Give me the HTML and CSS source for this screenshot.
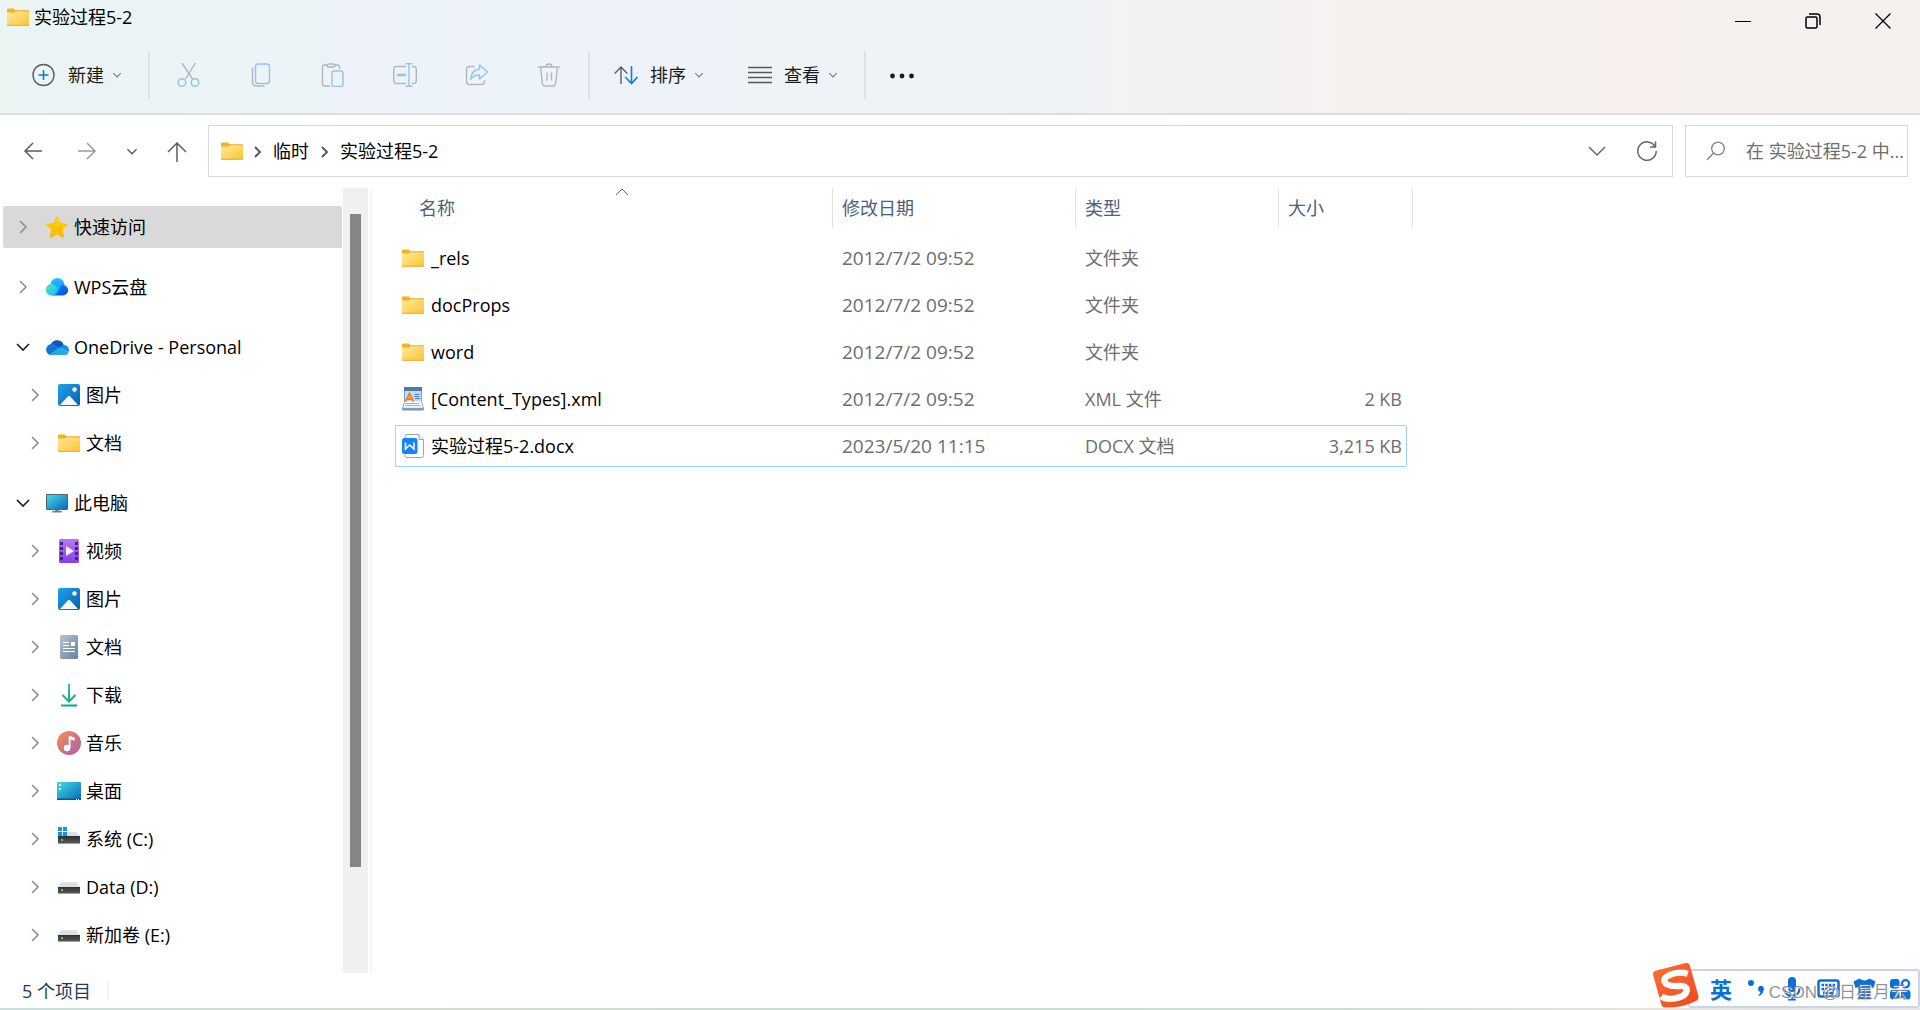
FILE: index.html
```
<!DOCTYPE html>
<html lang="zh-CN">
<head>
<meta charset="utf-8">
<meta name="viewport" content="width=device-width, initial-scale=1">
<title>实验过程5-2</title>
<link rel="stylesheet" href="styles.css">
</head>
<body>
<svg class="sprite" aria-hidden="true">
  <defs>
    <linearGradient id="g-folder" x1="0" y1="0" x2="1" y2="1"><stop offset="0" stop-color="#ffe9a2"/><stop offset="1" stop-color="#fec62f"/></linearGradient>
    <linearGradient id="g-star" x1="0" y1="0" x2="0" y2="1"><stop offset="0" stop-color="#ffd800"/><stop offset="1" stop-color="#fdb300"/></linearGradient>
    <linearGradient id="g-blue" x1="0" y1="0" x2="1" y2="1"><stop offset="0" stop-color="#1fa3e8"/><stop offset="1" stop-color="#0560b4"/></linearGradient>
    <linearGradient id="g-screen" x1="0" y1="0" x2="1" y2="1"><stop offset="0" stop-color="#3fdde0"/><stop offset="1" stop-color="#0a67c0"/></linearGradient>
    <linearGradient id="g-video" x1="0" y1="0" x2="0" y2="1"><stop offset="0" stop-color="#b678f2"/><stop offset="1" stop-color="#8440ea"/></linearGradient>
    <linearGradient id="g-doc" x1="0" y1="0" x2="1" y2="1"><stop offset="0" stop-color="#b4c5d8"/><stop offset="1" stop-color="#64819f"/></linearGradient>
    <linearGradient id="g-down" gradientUnits="userSpaceOnUse" x1="4" y1="0" x2="20" y2="24"><stop offset="0" stop-color="#3fd07f"/><stop offset="1" stop-color="#00969e"/></linearGradient>
    <linearGradient id="g-music" x1="0" y1="0" x2="1" y2="1"><stop offset="0" stop-color="#f6924c"/><stop offset="1" stop-color="#a95bb4"/></linearGradient>
    <linearGradient id="g-wps1" x1="0" y1="0" x2="1" y2="1"><stop offset="0" stop-color="#55e3b0"/><stop offset="1" stop-color="#1cc0ff"/></linearGradient>
    <linearGradient id="g-wps2" x1="0" y1="0" x2="1" y2="1"><stop offset="0" stop-color="#1a93ff"/><stop offset="1" stop-color="#0048d8"/></linearGradient>
    <linearGradient id="g-wps3" x1="0" y1="0" x2="0" y2="1"><stop offset="0" stop-color="#2bc0ff"/><stop offset="1" stop-color="#0a8cff"/></linearGradient>
    <linearGradient id="g-drive" x1="0" y1="0" x2="0" y2="1"><stop offset="0" stop-color="#303030"/><stop offset="1" stop-color="#5c5c5c"/></linearGradient>
    <linearGradient id="g-sogou" x1="0" y1="0" x2="1" y2="1"><stop offset="0" stop-color="#ff6e34"/><stop offset="1" stop-color="#ee4a1e"/></linearGradient>
  </defs>
  <symbol id="folder" viewBox="0 0 24 24">
    <path d="M1 4.500Q1 3.500 2 3.500h6l1.500 2V8H1z" fill="#f8b01c"/>
    <path d="M1 7.500h7.500l1.500-1.500h13v13.500q0 .5-.5.500h-21q-.500 0-.500-.500z" fill="url(#g-folder)"/>
    <path d="M9 5.800h14M1 20.300h22" stroke="#eaa41c" stroke-width="1"/>
  </symbol>
  <symbol id="star" viewBox="0 0 24 24"><path d="M12 1.500l3.300 6.900 7.700.900-5.700 5.200 1.500 7.600q.1.900-.8.500L12 19l-6 3.600q-.9.400-.8-.5l1.500-7.600L1 9.300l7.700-.9z" fill="url(#g-star)" stroke="#fdc20a" stroke-width=".8" stroke-linejoin="round"/></symbol>
  <symbol id="wps" viewBox="0 0 24 24">
    <circle cx="12.500" cy="10" r="7" fill="url(#g-wps3)"/>
    <path d="M7 20.500h11a5.300 5.300 0 1 0-4-9z" fill="url(#g-wps2)"/>
    <path d="M6.500 20.500q4.500 0 6-3l3-5.500-4-2z" fill="#19aeff"/>
    <path d="M6.500 20.500a5.800 5.800 0 1 1 5.600-7.500q1 5-5.600 7.500z" fill="url(#g-wps1)"/>
  </symbol>
  <symbol id="onedrive" viewBox="0 0 24 24">
    <path d="M6 9a7 7 0 0 1 12.800 1L14 15z" fill="#0a5cb0"/>
    <path d="M5 20A5.600 5.600 0 1 1 9.500 9.800L17 14z" fill="#0f78d4"/>
    <path d="M14 12.300l4.300-2.300A5 5 0 0 1 23.500 17z" fill="#1590df"/>
    <path d="M4 20l10-7.500 9.500 4.500a3.600 3.600 0 0 1-3.500 3z" fill="#28a8ea"/>
  </symbol>
  <symbol id="picture" viewBox="0 0 24 24"><rect x="1" y="1" width="22" height="22" rx="2" fill="url(#g-blue)"/><path d="M3 22l8-8.700q1-1 2 0l8 8.700z" fill="#f4f8fd"/><circle cx="17.500" cy="6.500" r="2.200" fill="#fff"/></symbol>
  <symbol id="pc" viewBox="0 0 24 24"><path d="M10 18h4v2h3v1.500H7V20h3z" fill="#77848f"/><rect x="1" y="3" width="22" height="16" rx="1" fill="#4f6476"/><rect x="2" y="4" width="20" height="14" fill="url(#g-screen)"/></symbol>
  <symbol id="video" viewBox="0 0 24 24"><rect x="2" y="0" width="20" height="24" rx="1.500" fill="url(#g-video)"/><path d="M3 3h3v3H3zM3 8h3v3H3zM3 13h3v3H3zM3 18h3v3H3zM18 3h3v3h-3zM18 8h3v3h-3zM18 13h3v3h-3zM18 18h3v3h-3z" fill="#47257f"/><path d="M9 7l8 5-8 5z" fill="#f4f0fc"/></symbol>
  <symbol id="doc" viewBox="0 0 24 24"><rect x="3" y="0" width="18" height="24" rx="1.500" fill="url(#g-doc)"/><path d="M6 7.500h6M6 10.500h6M6 13.500h12M6 16.500h12" stroke="#fff"/><rect x="14" y="7" width="4" height="4" fill="#fff"/></symbol>
  <symbol id="download" viewBox="0 0 24 24"><path d="M12 1v17M5.500 12l6.500 6.500L18.500 12M4 22.500h16" fill="none" stroke="url(#g-down)" stroke-width="2"/></symbol>
  <symbol id="music" viewBox="0 0 24 24"><circle cx="12" cy="12" r="12" fill="url(#g-music)"/><circle cx="10" cy="17" r="3.200" fill="#fff"/><path d="M11.700 17V4.500l6 2.200v3l-4.200-1.500V17z" fill="#fff"/></symbol>
  <symbol id="desktop" viewBox="0 0 24 24"><rect x="0" y="3" width="24" height="18" rx="1" fill="url(#g-screen)"/><path d="M0 20.300h24" stroke="#08538f" stroke-width="1.400"/><path d="M2 5h2v2H2zM2 9h2v2H2zM19 20h1v1h-1zM21 20h1v1h-1z" fill="#fff"/></symbol>
  <symbol id="drive" viewBox="0 0 24 24"><path d="M4.500 7h15l3.500 5H1z" fill="#dfe0e4"/><rect x="1" y="12" width="22" height="7" fill="url(#g-drive)"/><path d="M1 18.500h22" stroke="#a0a0a0"/><rect x="4" y="14" width="2" height="2" fill="#3be23b"/></symbol>
  <symbol id="sysdrive" viewBox="0 0 24 24"><path d="M4.500 5h15l3.500 4H1z" fill="#dfe0e4"/><rect x="1" y="9" width="22" height="8" fill="url(#g-drive)"/><path d="M1 16.500h22" stroke="#a0a0a0"/><rect x="4" y="12" width="2" height="2" fill="#3be23b"/><path d="M1 0h4v4H1zM6 0h4v4H6zM1 5h4v4H1zM6 5h4v4H6z" fill="#1593e0"/></symbol>
  <symbol id="xml" viewBox="0 0 24 24">
    <path d="M3 20l-2 2q0 1.500 2 1.500h18q2 0 2-1.500l-2-2z" fill="#7595b8"/><path d="M3.500 2h17v13l2 6.500h-21l2-6.500z" fill="#c3dcf3" stroke="#7e9fc4"/><path d="M4 14h16l1.500 6.500h-19z" fill="#f5f9fd"/><path d="M3 0h18v4H3z" fill="#4a79ab"/>
    <path d="M4.500 14.500l4-8 4 8M6.500 12h4" fill="none" stroke="#f0802c" stroke-width="1.800"/><path d="M13.500 7.500h5M13.500 9.500h5M14 11.500h5" stroke="#4b82cf"/><path d="M4 16.500h14M4 18.500h15" stroke="#a7afb8"/>
  </symbol>
  <symbol id="docx" viewBox="0 0 24 24"><path d="M6 .500h12l4.500 5v16q0 2-2 2H6q-2 0-2-2v-19q0-2 2-2z" fill="#fff" stroke="#98a3b3"/><path d="M18 .500v5h4.500" fill="#eef1f5" stroke="#98a3b3"/><rect x="1" y="4" width="15.500" height="16" rx="2.500" fill="#1583ff"/><path d="M4.500 8.500V15l4.200-4 4.200 4V8.500" fill="none" stroke="#fff" stroke-width="1.600"/></symbol>
  <symbol id="right" viewBox="0 0 12 16"><path d="M3 2l6 6-6 6" fill="none" stroke="currentColor" stroke-width="1.500"/></symbol>
  <symbol id="down" viewBox="0 0 16 12"><path d="M2 3l6 6 6-6" fill="none" stroke="currentColor" stroke-width="1.700"/></symbol>
</svg>

<header class="chrome">
  <div class="titlebar">
    <svg class="icon"><use href="#folder"/></svg>
    <h1 class="title">实验过程5-2</h1>
    <div class="controls">
      <button type="button" class="control" aria-label="最小化"><svg class="glyph" viewBox="0 0 16 16"><path d="M0 8.500h16" stroke="#000"/></svg></button>
      <button type="button" class="control" aria-label="向下还原"><svg class="glyph" viewBox="0 0 16 16"><rect x="1" y="4" width="11" height="11" rx="1.500" fill="none" stroke="#000" stroke-width="1.500"/><path d="M4 1h8q3 0 3 3v8" fill="none" stroke="#000" stroke-width="1.500"/></svg></button>
      <button type="button" class="control" aria-label="关闭"><svg class="glyph" viewBox="0 0 16 16"><path d="M.500.500l15 15M15.500.500l-15 15" stroke="#000" stroke-width="1.300"/></svg></button>
    </div>
  </div>
  <div class="toolbar">
    <button type="button" class="tool">
      <svg class="icon" viewBox="0 0 24 24" fill="none"><circle cx="11.500" cy="12" r="10.500" stroke="#5b5d5e" stroke-width="1.400"/><path d="M11.500 7v10M6.500 12h10" stroke="#0c78d4" stroke-width="1.500"/></svg>
      <span>新建</span><svg class="caret"><use href="#down"/></svg>
    </button>
    <span class="divider"></span>
    <div class="actions">
      <button type="button" class="action" aria-label="剪切"><svg class="icon" viewBox="0 0 24 24" fill="none" stroke-width="1.400"><path d="M5 0l10.500 16M18.500 0L8.500 16" stroke="#b3b7b9"/><circle cx="5" cy="19.500" r="3.800" stroke="#8fc5ee"/><circle cx="18" cy="19.500" r="3.800" stroke="#8fc5ee"/></svg></button>
      <button type="button" class="action" aria-label="复制"><svg class="icon" viewBox="0 0 24 24" fill="none" stroke-width="1.400"><path d="M3.500 4.500V19q0 4 4 4h8" stroke="#b3b7b9"/><rect x="6.500" y="1" width="14" height="19.500" rx="2.500" stroke="#8fc5ee"/></svg></button>
      <button type="button" class="action" aria-label="粘贴"><svg class="icon" viewBox="0 0 24 24" fill="none" stroke-width="1.400"><path d="M6 2H3.500Q1.500 2 1.500 4v17q0 2 2 2H9M14 2h2.500q2 0 2 2v2" stroke="#b3b7b9"/><rect x="6" y="1" width="8" height="3" rx="1.500" stroke="#b3b7b9"/><rect x="11" y="8" width="11" height="15.500" rx="2" stroke="#8fc5ee"/></svg></button>
      <button type="button" class="action" aria-label="重命名"><svg class="icon" viewBox="0 0 24 24" fill="none" stroke-width="1.400"><path d="M13 3.500H3.500Q.700 3.500.700 6.500v11q0 3 2.800 3H13M19 3.500h1.500q2.800 0 2.800 3v11q0 3-2.800 3H19" stroke="#b3b7b9"/><path d="M16 1v22M12.500.700h7M12.500 23.300h7" stroke="#8fc5ee"/><path d="M4 12h9" stroke="#8fc5ee" stroke-width="2.500"/></svg></button>
      <button type="button" class="action" aria-label="共享"><svg class="icon" viewBox="0 0 24 24" fill="none" stroke-width="1.400" stroke-linejoin="round"><path d="M9.500 3.500H4.500Q1.500 3.500 1.500 6.500v12q0 3 3 3h12q3 0 3-3V17" stroke="#b3b7b9"/><path d="M14.500 2l8 7-8 7v-4q-6 0-9 4.500Q6.500 7 14.500 6z" stroke="#8fc5ee"/></svg></button>
      <button type="button" class="action" aria-label="删除"><svg class="icon" viewBox="0 0 24 24" fill="none" stroke="#b3b7b9" stroke-width="1.400"><path d="M1 4h22M3.500 4l2 17q.300 2 2.300 2h8.400q2 0 2.300-2l2-17M9 4q0-3 3-3t3 3M10 9.500v8M14.500 9.500v8"/></svg></button>
    </div>
    <span class="divider"></span>
    <button type="button" class="tool">
      <svg class="icon" viewBox="0 0 24 24" fill="none"><path d="M7 21V4M.700 10.500L7 4l6.300 6.500" stroke="#5b5d5e" stroke-width="1.400"/><path d="M17.500 3v17.500M11.200 14l6.300 6.500L23.500 14" stroke="#0c80de" stroke-width="1.600"/></svg>
      <span>排序</span><svg class="caret"><use href="#down"/></svg>
    </button>
    <button type="button" class="tool">
      <svg class="icon" viewBox="0 0 24 24"><path d="M0 4.500h24M0 9.500h24M0 14.500h24M0 19.500h24" stroke="#55585a" stroke-width="1.300"/></svg>
      <span>查看</span><svg class="caret"><use href="#down"/></svg>
    </button>
    <span class="divider"></span>
    <button type="button" class="tool" aria-label="更多"><svg class="icon" viewBox="0 0 24 24" fill="#1a1a1a"><circle cx="2.500" cy="13" r="2.400"/><circle cx="12" cy="13" r="2.400"/><circle cx="21.500" cy="13" r="2.400"/></svg></button>
  </div>
</header>

<div class="navbar">
  <div class="history">
    <button type="button" class="nav-btn" aria-label="后退"><svg class="icon" viewBox="0 0 24 24" fill="none" stroke="#5d5d5d" stroke-width="1.500"><path d="M21 12H4M12 4l-8 8 8 8"/></svg></button>
    <button type="button" class="nav-btn" aria-label="前进"><svg class="icon" viewBox="0 0 24 24" fill="none" stroke="#9a9a9a" stroke-width="1.500"><path d="M3 12h17M12 4l8 8-8 8"/></svg></button>
    <button type="button" class="nav-btn narrow" aria-label="最近浏览的位置"><svg class="recent"><use href="#down"/></svg></button>
    <button type="button" class="nav-btn" aria-label="上移"><svg class="icon" viewBox="0 0 24 24" fill="none" stroke="#5d5d5d" stroke-width="1.500"><path d="M12 23V4M3 13l9-9 9 9"/></svg></button>
  </div>
  <div class="address">
    <nav class="crumbs" aria-label="地址">
      <svg class="icon"><use href="#folder"/></svg>
      <svg class="crumb-sep" viewBox="0 0 12 16"><path d="M3 4l5 5-5 5" fill="none" stroke="#555" stroke-width="1.900"/></svg>
      <a class="crumb" href="#">临时</a>
      <svg class="crumb-sep" viewBox="0 0 12 16"><path d="M3 4l5 5-5 5" fill="none" stroke="#555" stroke-width="1.900"/></svg>
      <a class="crumb" href="#">实验过程5-2</a>
    </nav>
    <button type="button" class="addr-btn" aria-label="以前的位置"><svg class="icon" viewBox="0 0 24 24"><path d="M4 8l8 8 8-8" fill="none" stroke="#666" stroke-width="1.500"/></svg></button>
    <button type="button" class="addr-btn" aria-label="刷新"><svg class="icon" viewBox="0 0 24 24" fill="none" stroke="#666" stroke-width="1.500"><path d="M20 7.500A9.200 9.200 0 1 0 21.200 12M20.500 2.500v5.500h-5.500"/></svg></button>
  </div>
  <label class="search">
    <svg class="icon" viewBox="0 0 24 24" fill="none" stroke="#808080" stroke-width="1.300"><circle cx="14" cy="9.500" r="6.300"/><path d="M9.500 14L3 21"/></svg>
    <input class="search-input" type="text" placeholder="在 实验过程5-2 中..." aria-label="搜索">
  </label>
</div>

<main class="main">
  <aside class="sidebar">
    <ul class="tree">
      <li><a class="node selected" href="#"><svg class="twist"><use href="#right"/></svg><svg class="icon"><use href="#star"/></svg>快速访问</a></li>
      <li class="group"><a class="node" href="#"><svg class="twist"><use href="#right"/></svg><svg class="icon"><use href="#wps"/></svg>WPS云盘</a></li>
      <li class="group"><a class="node" href="#"><svg class="twist open"><use href="#down"/></svg><svg class="icon"><use href="#onedrive"/></svg>OneDrive - Personal</a>
        <ul class="branch">
          <li><a class="node" href="#"><svg class="twist"><use href="#right"/></svg><svg class="icon"><use href="#picture"/></svg>图片</a></li>
          <li><a class="node" href="#"><svg class="twist"><use href="#right"/></svg><svg class="icon"><use href="#folder"/></svg>文档</a></li>
        </ul>
      </li>
      <li class="group"><a class="node" href="#"><svg class="twist open"><use href="#down"/></svg><svg class="icon"><use href="#pc"/></svg>此电脑</a>
        <ul class="branch">
          <li><a class="node" href="#"><svg class="twist"><use href="#right"/></svg><svg class="icon"><use href="#video"/></svg>视频</a></li>
          <li><a class="node" href="#"><svg class="twist"><use href="#right"/></svg><svg class="icon"><use href="#picture"/></svg>图片</a></li>
          <li><a class="node" href="#"><svg class="twist"><use href="#right"/></svg><svg class="icon"><use href="#doc"/></svg>文档</a></li>
          <li><a class="node" href="#"><svg class="twist"><use href="#right"/></svg><svg class="icon"><use href="#download"/></svg>下载</a></li>
          <li><a class="node" href="#"><svg class="twist"><use href="#right"/></svg><svg class="icon"><use href="#music"/></svg>音乐</a></li>
          <li><a class="node" href="#"><svg class="twist"><use href="#right"/></svg><svg class="icon"><use href="#desktop"/></svg>桌面</a></li>
          <li><a class="node" href="#"><svg class="twist"><use href="#right"/></svg><svg class="icon"><use href="#sysdrive"/></svg>系统 (C:)</a></li>
          <li><a class="node" href="#"><svg class="twist"><use href="#right"/></svg><svg class="icon"><use href="#drive"/></svg>Data (D:)</a></li>
          <li><a class="node" href="#"><svg class="twist"><use href="#right"/></svg><svg class="icon"><use href="#drive"/></svg>新加卷 (E:)</a></li>
        </ul>
      </li>
    </ul>
    <div class="scrollbar"><div class="thumb"></div></div>
  </aside>

  <section class="files">
    <table class="listing">
      <colgroup><col class="c-name"><col class="c-date"><col class="c-type"><col class="c-size"><col class="c-edge"></colgroup>
      <thead>
        <tr>
          <th scope="col"><div class="head first">名称<svg class="sort" viewBox="0 0 12 8"><path d="M0 7l6-6 6 6" fill="none" stroke="#666"/></svg></div></th>
          <th scope="col"><div class="head">修改日期</div></th>
          <th scope="col"><div class="head">类型</div></th>
          <th scope="col" colspan="2"><div class="head">大小</div></th>
        </tr>
      </thead>
      <tbody>
        <tr><td><a class="file" href="#"><svg class="icon"><use href="#folder"/></svg>_rels</a></td><td class="date">2012/7/2 09:52</td><td>文件夹</td><td class="size"></td></tr>
        <tr><td><a class="file" href="#"><svg class="icon"><use href="#folder"/></svg>docProps</a></td><td class="date">2012/7/2 09:52</td><td>文件夹</td><td class="size"></td></tr>
        <tr><td><a class="file" href="#"><svg class="icon"><use href="#folder"/></svg>word</a></td><td class="date">2012/7/2 09:52</td><td>文件夹</td><td class="size"></td></tr>
        <tr><td><a class="file" href="#"><svg class="icon"><use href="#xml"/></svg>[Content_Types].xml</a></td><td class="date">2012/7/2 09:52</td><td>XML 文件</td><td class="size">2 KB</td></tr>
        <tr class="focused"><td><a class="file" href="#"><svg class="icon"><use href="#docx"/></svg>实验过程5-2.docx</a></td><td class="date">2023/5/20 11:15</td><td>DOCX 文档</td><td class="size">3,215 KB</td></tr>
      </tbody>
    </table>
  </section>
</main>

<footer class="status"><span class="count">5 个项目</span></footer>

<div class="ime">
  <svg class="ime-logo" viewBox="0 0 48 46"><path d="M3 8L34 0q3-.500 4 2l9 32q.500 3-2 4.500Q30 46 13 45.500q-3 0-4-3L.500 12q-.500-3 2.500-4z" fill="url(#g-sogou)"/><path d="M36 11Q26 8 17 12.500T15 22q4 2 12 1.500T35 28q-1 6-11 8t-15-2" fill="none" stroke="#fff" stroke-width="6.500"/></svg>
  <div class="ime-bar">
    <span class="ime-mode">英</span>
    <svg class="ime-icon" viewBox="0 0 24 24" fill="#0a6fd8"><circle cx="7" cy="6" r="3"/><path d="M14 11.500a3 3 0 1 1 5.500 2q-.5 4-4.500 5.500l-.5-1q2-1.500 2-3-2.500-.500-2.500-3.500z"/></svg>
    <svg class="ime-icon" viewBox="0 0 24 24"><rect x="8" y="0" width="8" height="15" rx="4" fill="#0a6fd8"/><path d="M4.500 11q0 7.500 7.500 7.500t7.500-7.500M12 18v5M8 22.500h8" fill="none" stroke="#0a6fd8" stroke-width="2.200"/></svg>
    <svg class="ime-icon" viewBox="0 0 24 24" fill="none" stroke="#0a6fd8"><rect x="2.500" y="3.500" width="20" height="16" rx="2" stroke-width="2.500"/><path d="M5.500 8h14M5.500 12h14" stroke-width="2.500" stroke-dasharray="2.500 1.200"/><path d="M7 16h11" stroke-width="2.500"/></svg>
    <svg class="ime-icon" viewBox="0 0 24 24"><path d="M7.500 1.500q5 4 10 0l6 3-2 6.500-3-1v12.500q-6 1.500-12 0V10l-3 1-2-6.500z" fill="#0a6fd8"/></svg>
    <svg class="ime-icon" viewBox="0 0 24 24" fill="#0a6fd8"><rect x="2" y="2" width="9.500" height="9.500" rx="3"/><circle cx="17.500" cy="6.800" r="3.600" fill="none" stroke="#0a6fd8" stroke-width="2.300"/><rect x="2" y="13" width="9.500" height="9.500" rx="3"/><rect x="13" y="13" width="9.500" height="9.500" rx="3"/></svg>
  </div>
  <span class="watermark">CSDN @日星月云</span>
</div>
</body>
</html>
```
FILE: styles.css
```
* { box-sizing: border-box; }

body {
  margin: 0;
  min-height: 100vh;
  display: flex;
  flex-direction: column;
  background: #fff;
  color: #000;
  font-family: "Open Sans", "Noto Sans CJK SC", sans-serif;
  font-size: 18px;
  line-height: 24px;
}

button {
  border: 0;
  padding: 0;
  background: none;
  font: inherit;
  color: inherit;
}

a { color: inherit; text-decoration: none; }
svg { flex: none; display: block; }
.sprite { position: absolute; width: 0; height: 0; }
.icon { width: 24px; height: 24px; }

/* Title bar and command bar */
.chrome {
  background: linear-gradient(90deg, #ebf5f4 0%, #ecf4f6 12%, #eef3fb 24%, #edf3f8 36%, #eef3f7 52%, #f2f2f3 62%, #f6f1ee 73%, #f7f0ee 85%, #f6f1ee 100%);
  border-bottom: 2px solid rgba(120, 140, 140, 0.2);
}

.titlebar {
  height: 36px;
  display: flex;
  align-items: center;
  gap: 4px;
  padding: 0 2px 2px 6px;
}

.title { margin: 0; font-size: 18px; line-height: 24px; font-weight: 400; }
.controls { margin-left: auto; align-self: stretch; display: flex; }

.control {
  width: 70px;
  display: flex;
  align-items: center;
  justify-content: center;
  padding-top: 8px;
}

.glyph { width: 16px; height: 16px; }
.toolbar { height: 77px; display: flex; align-items: center; padding-left: 8px; }

.tool {
  display: flex;
  align-items: center;
  gap: 12px;
  height: 48px;
  padding: 0 20px 0 24px;
  color: #1b1b1b;
}

.caret { width: 10px; height: 8px; margin-left: -4px; color: #777; }
.divider { width: 2px; height: 48px; margin-left: 6px; background: #dde3e5; }
.actions { display: flex; padding-left: 3px; }
.actions + .divider { margin-left: 3px; }

.action {
  width: 72px;
  height: 48px;
  display: flex;
  align-items: center;
  justify-content: center;
}

/* Navigation row */
.navbar { display: flex; padding: 10px 12px 6px 0; height: 68px; }
.history { display: flex; width: 208px; padding-left: 6px; }
.nav-btn { width: 54px; display: flex; align-items: center; justify-content: center; color: #555; }
.narrow { width: 36px; }
.recent { width: 12px; height: 9px; }

.address, .search {
  display: flex;
  align-items: center;
  border: 1px solid #d9d9d9;
  background: #fff;
}

.address { flex: 1; padding-left: 11px; }
.crumbs { flex: 1; display: flex; align-items: center; }
.crumb-sep { width: 12px; height: 16px; margin: 0 9px 0 8px; }
.crumb + .crumb-sep { margin-left: 10px; }
.addr-btn { width: 50px; height: 50px; display: flex; align-items: center; justify-content: center; }
.search { width: 223px; margin-left: 12px; padding-left: 18px; gap: 18px; }

.search-input {
  flex: 1;
  min-width: 0;
  padding: 0;
  border: 0;
  outline: 0;
  background: none;
  font: inherit;
  color: #333;
}

.search-input::placeholder { color: #6d6d6d; opacity: 1; }

/* Folder tree */
.main { flex: 1; display: flex; }
.sidebar { display: flex; width: 368px; margin-top: 5px; }
.tree, .branch { margin: 0; padding: 0; list-style: none; }
.tree { flex: 1; padding: 18px 1px 6px 3px; }
.group { padding-top: 12px; }

.node {
  display: flex;
  align-items: center;
  height: 42px;
  margin-bottom: 6px;
  padding-left: 12px;
  border-radius: 2px;
}

.node .icon { margin: 0 5px 0 14px; }
.branch .node { padding-left: 24px; }
.selected { background: #d9d9d9; }
.twist { width: 16px; height: 16px; color: #8b8b8b; }
.open { height: 12px; color: #222; }
.scrollbar { width: 25px; background: #f0f0f0; padding: 26px 7px 106px; display: flex; }
.thumb { flex: 1; background: #858585; }

/* File list */
.files {
  flex: 1;
  margin: 5px 0 0 2px;
  padding-left: 23px;
  border-left: 2px solid #f5f5f5;
}

.listing {
  table-layout: fixed;
  width: 1018px;
  margin-top: -5px;
  border-spacing: 0 5px;
}

.c-name { width: 438px; }
.c-date { width: 243px; }
.c-type { width: 203px; }
.c-size { width: 128px; }
.c-edge { width: 6px; }
.listing th { height: 44px; padding: 0; vertical-align: top; font-weight: 400; text-align: left; }

.head {
  display: flex;
  align-items: center;
  height: 40px;
  padding-left: 9px;
  border-right: 1px solid #e2e2e2;
  color: #4c607a;
}

.first { position: relative; padding-left: 24px; }
.sort { position: absolute; left: calc(50% + 2px); top: 0; width: 12px; height: 8px; }

.listing td {
  height: 42px;
  padding: 0 0 0 9px;
  border: 1px solid transparent;
  border-width: 1px 0;
  color: #6d6d6d;
}

.listing td:first-child { padding-left: 5px; border-left-width: 1px; }
.listing .date { font-size: 19px; }
.listing .size { padding: 0 4px 0 0; text-align: right; border-right-width: 1px; }
.focused td { border-color: #99d1ff; }
.focused td:first-child { border-radius: 2px 0 0 2px; }
.focused .size { border-radius: 0 2px 2px 0; }
.file { display: flex; align-items: center; gap: 6px; color: #000; }

/* Status bar */
.status {
  display: flex;
  align-items: center;
  height: 37px;
  padding-left: 22px;
  color: #1e395b;
  border-bottom: 2px solid;
  border-image: linear-gradient(90deg, #c5dfdb, #d5dccb 22%, #c5ded2 45%, #cbdfd0 70%, #e8e4dc 86%, #e6e4e4) 1;
}

.count { padding-right: 16px; border-right: 2px solid #f3f3f3; line-height: 18px; }

/* Input method bar floating over the window corner */
.ime { position: fixed; right: 0; bottom: 2px; display: flex; }
.ime-logo { position: absolute; left: 0; bottom: 0; width: 48px; height: 45px; }

.ime-bar {
  display: flex;
  align-items: center;
  gap: 12px;
  height: 39px;
  margin-left: 36px;
  padding: 0 6px 0 20px;
  border: 2px solid #c9d5e8;
  border-radius: 3px;
  background: #fff;
}

.ime-mode { color: #0a6fd8; font-size: 22px; font-weight: 700; }
.ime-icon { width: 24px; height: 24px; }

.watermark {
  position: absolute;
  right: 13px;
  bottom: 3px;
  font-family: "Liberation Sans", "Noto Sans CJK SC", sans-serif;
  font-size: 17px;
  color: rgba(110, 110, 110, 0.75);
  text-shadow: 1px 1px 1px #fff;
  white-space: nowrap;
}
```
